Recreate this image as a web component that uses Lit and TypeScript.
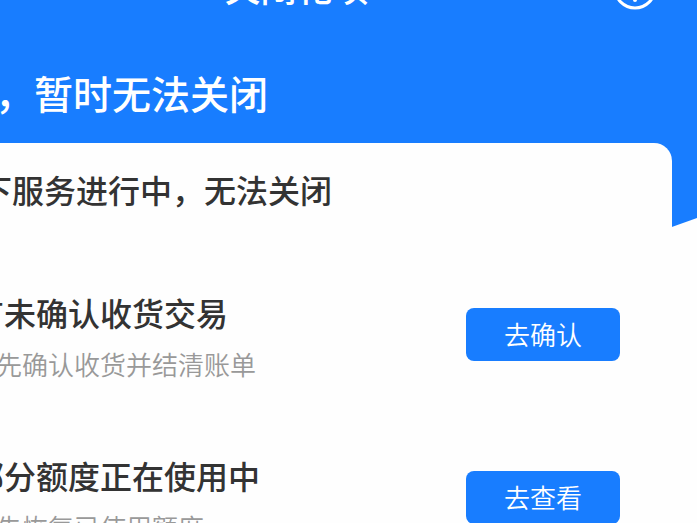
import { LitElement, html, css } from "lit";
import { customElement, property } from "lit/decorators.js";

@customElement("service-row")
class ServiceRow extends LitElement {
  @property() heading = "";
  @property() hint = "";
  @property() action = "";

  static styles = css`
    :host {
      display: flex;
      align-items: center;
      justify-content: space-between;
      gap: 24px;
    }
    .text {
      display: grid;
      gap: 12px;
      white-space: nowrap;
    }
    .heading {
      margin: 0;
      font-size: 32px;
      line-height: 48px;
      font-weight: 500;
      color: #333;
    }
    .hint {
      margin: 0 0 0 -2px;
      font-size: 26px;
      line-height: 32px;
      font-weight: 350;
      color: #999;
    }
    .action {
      flex: none;
      box-sizing: border-box;
      padding: 7px 38px 9px;
      border: 0;
      border-radius: 8px;
      background: #187dff;
      color: #fff;
      font-family: inherit;
      font-size: 26px;
      line-height: 37px;
      font-weight: 350;
      cursor: pointer;
    }
  `;

  render() {
    return html`
      <div class="text">
        <h3 class="heading">${this.heading}</h3>
        <p class="hint">${this.hint}</p>
      </div>
      <button class="action" type="button">${this.action}</button>
    `;
  }
}

@customElement("app-root")
class AppRoot extends LitElement {
  static styles = css`
    :host {
      display: block;
      height: 100vh;
      overflow: hidden;
      background: #fefefe;
      font-family: "Noto Sans CJK SC", "Noto Sans", sans-serif;
    }
    .page {
      margin: -40px 0 0 -104px;
    }
    .hero {
      box-sizing: border-box;
      height: 268px;
      background: #187dff;
      color: #fff;
      clip-path: polygon(0 0, 100% 0, 100% 258px, calc(100% - 28px) 268px, 0 268px);
    }
    .nav {
      display: grid;
      grid-template-columns: 1fr auto 1fr;
      align-items: center;
      height: 56px;
      padding: 0 40px;
    }
    .title {
      grid-column: 2;
      margin: 0;
      padding-bottom: 4px;
      font-size: 36px;
      line-height: 52px;
      font-weight: 500;
    }
    .help {
      justify-self: end;
      display: flex;
      padding: 0;
      border: 0;
      background: none;
      color: inherit;
      cursor: pointer;
    }
    .notice {
      margin: 48px 0 0;
      padding-left: 99px;
      font-size: 39px;
      line-height: 56px;
      font-weight: 500;
      white-space: nowrap;
    }
    .card {
      position: relative;
      margin: -85px 25px 0 26px;
      padding: 22px 52px 64px 50px;
      border-radius: 18px;
      background: #fefefe;
    }
    .card-title {
      margin: 0 0 75px -24px;
      font-size: 32px;
      line-height: 48px;
      font-weight: 500;
      color: #333;
      white-space: nowrap;
    }
    .rows {
      display: grid;
      gap: 71px;
    }
  `;

  render() {
    return html`
      <main class="page">
        <header class="hero">
          <div class="nav">
            <h1 class="title">关闭花呗</h1>
            <button class="help" type="button" aria-label="帮助">
              <svg width="44" height="44" viewBox="0 0 44 44" fill="none" stroke="currentColor" stroke-width="3">
                <circle cx="22" cy="22" r="20" />
                <path d="M16 17a6 6 0 1 1 9 5c-2 1-3 2-3 5" stroke-linecap="round" />
                <circle cx="22" cy="34" r="2" fill="currentColor" stroke="none" />
              </svg>
            </button>
          </div>
          <p class="notice">，暂时无法关闭</p>
        </header>
        <section class="card">
          <h2 class="card-title">以下服务进行中，无法关闭</h2>
          <div class="rows">
            <service-row heading="有未确认收货交易" hint="请先确认收货并结清账单" action="去确认"></service-row>
            <service-row heading="部分额度正在使用中" hint="请先恢复已使用额度" action="去查看"></service-row>
          </div>
        </section>
      </main>
    `;
  }
}
